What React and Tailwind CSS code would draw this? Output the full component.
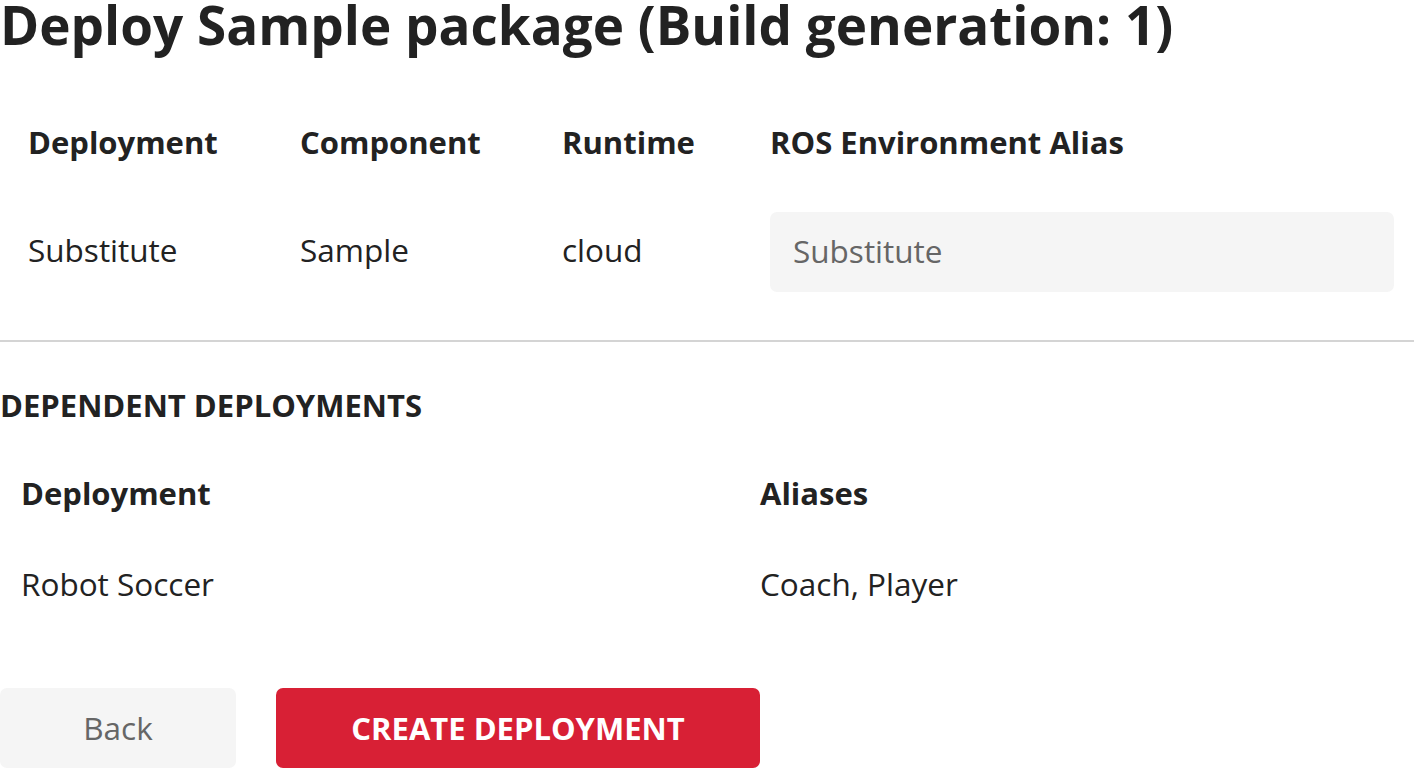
export default function App() {
  const font = { fontFamily: '"Open Sans", "Noto Sans", sans-serif' };
  return (
    <div className="w-[1414px] h-[780px] bg-white text-[#222222] overflow-hidden" style={font}>
      <h1 className="-mt-[11px] text-[53px] leading-[72px] font-bold whitespace-nowrap">
        Deploy Sample package (Build generation: 1)
      </h1>

      <div className="mt-[41px] grid grid-cols-[272px_262px_208px_1fr]">
        <div className="h-[80px] pl-[28px] flex items-center text-[31px] font-bold leading-[40px]">Deployment</div>
        <div className="h-[80px] pl-[28px] flex items-center text-[31px] font-bold leading-[40px]">Component</div>
        <div className="h-[80px] pl-[28px] flex items-center text-[31px] font-bold leading-[40px]">Runtime</div>
        <div className="h-[80px] pl-[28px] flex items-center text-[31px] font-bold leading-[40px]">ROS Environment Alias</div>

        <div className="mt-[30px] h-[80px] pl-[28px] pb-[4px] flex items-center text-[31.5px] leading-[40px]">Substitute</div>
        <div className="mt-[30px] h-[80px] pl-[28px] pb-[4px] flex items-center text-[31.5px] leading-[40px]">Sample</div>
        <div className="mt-[30px] h-[80px] pl-[28px] pb-[4px] flex items-center text-[31.5px] leading-[40px]">cloud</div>
        <div className="mt-[30px] h-[80px] pl-[28px] pr-[20px] flex items-center">
          <div className="w-full h-[80px] rounded-[7px] bg-[#f5f5f5] pl-[23px] pb-[2px] flex items-center text-[31.5px] leading-[40px] text-[#666666]">
            Substitute
          </div>
        </div>
      </div>

      <div className="mt-[48px] h-[2px] bg-[#d4d4d4]" />

      <h2 className="mt-[43px] text-[31px] leading-[40px] font-bold whitespace-nowrap">DEPENDENT DEPLOYMENTS</h2>

      <div className="mt-[38px] grid grid-cols-[739px_1fr]">
        <div className="h-[60px] pl-[21px] flex items-center text-[31px] font-bold leading-[40px]">Deployment</div>
        <div className="h-[60px] pl-[21px] flex items-center text-[31px] font-bold leading-[40px]">Aliases</div>
        <div className="mt-[31px] h-[60px] pl-[21px] flex items-center text-[31.5px] leading-[40px]">Robot Soccer</div>
        <div className="mt-[31px] h-[60px] pl-[21px] flex items-center text-[31.5px] leading-[40px]">Coach, Player</div>
      </div>

      <div className="mt-[74px] flex gap-[40px]">
        <button className="w-[236px] h-[80px] rounded-[7px] bg-[#f5f5f5] text-[#666666] text-[31.5px] leading-[40px]">
          Back
        </button>
        <button className="w-[484px] h-[80px] rounded-[7px] bg-[#d82035] text-white text-[31px] leading-[40px] font-bold uppercase">
          Create Deployment
        </button>
      </div>
    </div>
  );
}
